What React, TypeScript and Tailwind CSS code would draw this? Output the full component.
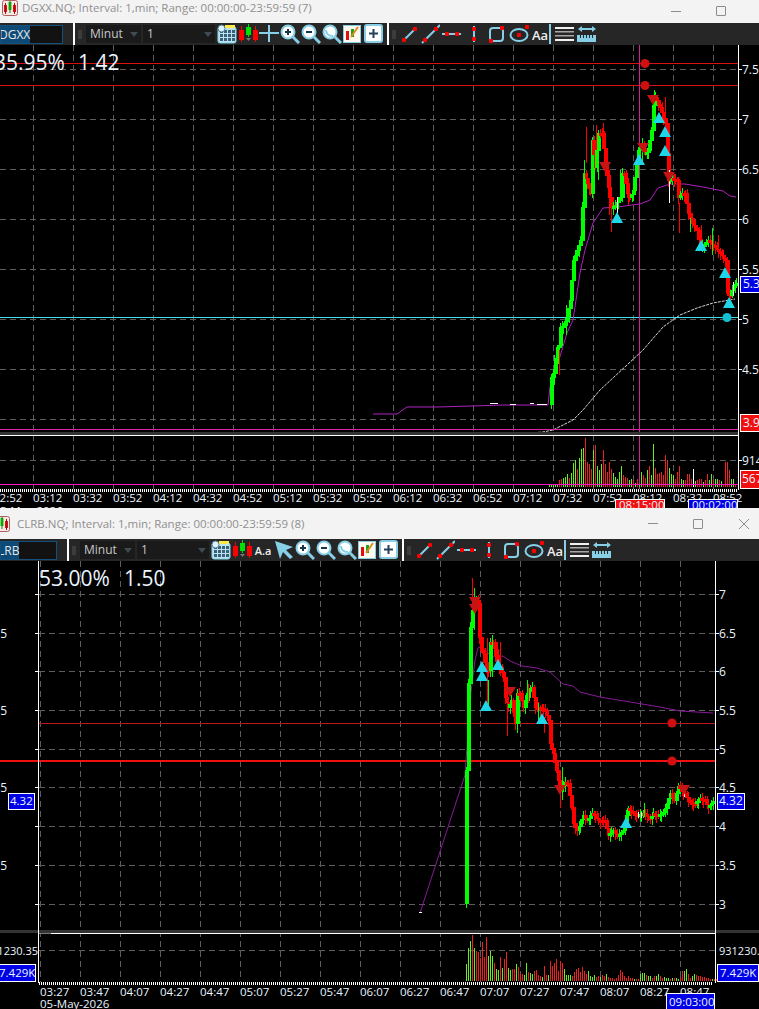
import React from "react";

const GREEN = "#00ff00";
const RED = "#ff0000";
const FONT = "'Open Sans', 'Noto Sans', sans-serif";

type Pt = [number, number];
type Wick = [number, number, number, string];

const line1: Pt[] = [[549,404],[551,377],[553,373],[555,363],[557,347],[559,345],[560,327],[563,325],[567,316],[570,300],[573,260],[577,250],[580,240],[582,207],[584,173],[587,183],[590,193],[592,140],[595,167],[598,133],[602,133],[605,162],[608,187],[611,207],[615,205],[620,197],[622,173],[624,173],[627,193],[630,197],[633,190],[638,150],[642,143],[645,153],[648,150],[651,130],[653,105],[655,97],[660,107],[665,123],[667,153],[668,180],[672,178],[677,180],[678,197],[682,193],[685,193],[688,213],[692,223],[697,230],[700,247],[708,240],[715,247],[720,253],[725,260],[727,293],[730,295],[733,285],[736,283]];
const wicks1: Wick[] = [[586,127,163,RED],[596,125,150,RED],[603,123,133,RED],[611,193,232,RED],[654,90,105,GREEN],[665,97,127,RED],[669,170,203,"#ffffff"],[679,203,233,RED],[617,197,213,"#ffffff"],[584,160,185,GREEN],[620,170,200,GREEN],[701,225,245,RED],[690,218,232,GREEN],[733,282,296,"#ffffff"],[566,305,335,GREEN],[554,355,385,GREEN],[559,350,375,RED],[598,150,180,GREEN],[609,170,215,RED],[628,178,205,RED],[642,140,165,GREEN],[712,228,255,GREEN],[718,235,258,RED]];
const vwap1: Pt[] = [[373,414],[397,414],[407,407],[437,407],[505,405],[548,405],[550,387],[558,363],[567,333],[573,320],[580,273],[585,250],[593,223],[603,208],[617,207],[640,204],[650,200],[658,188],[670,184],[685,184],[703,187],[723,191],[730,196],[736,197]];
const ma1: Pt[] = [[530,433],[543,432],[553,430],[573,420],[583,410],[600,390],[627,365],[643,350],[663,327],[680,315],[697,308],[713,303],[735,299]];
const vol1 = "g3 g3 g3 g3 g3 r7 r8 g9 g10 g13 r9 g14 g24 g27 r18 g29 g38 g39 r49 r25 r23 r18 g37 r42 g21 g17 g23 r37 r23 r15 r25 r18 g14 g10 g8 g15 g21 r12 r10 r9 g7 g8 r7 g4 r8 g2 g15 r12 r9 g17 r21 g12 g43 r19 r13 r14 r15 r12 r32 r27 g19 g13 g12 r8 r15 r21 g8 g7 r7 r13 r13 r8 w18 g6 r7 r8 r8 g5 r7 r13 g7 g13 r7 g8 g8 r7 g6 r3 r25 r25 r17 g8 g8 r3";

const line2: Pt[] = [[466,903],[466,770],[468,683],[470,627],[472,610],[474,603],[476,600],[478,603],[479,637],[481,650],[483,653],[486,670],[488,670],[490,642],[493,642],[497,667],[500,667],[503,677],[505,697],[508,707],[511,700],[515,723],[517,693],[520,693],[523,707],[527,693],[532,687],[535,707],[540,707],[545,710],[548,720],[550,743],[553,753],[556,770],[560,790],[565,782],[568,783],[571,807],[573,823],[577,830],[580,822],[583,815],[587,820],[592,813],[595,815],[598,820],[605,820],[608,835],[613,830],[617,836],[623,830],[628,808],[633,813],[638,814],[643,813],[650,818],[653,813],[658,815],[663,812],[667,803],[670,793],[674,800],[678,786],[685,795],[690,802],[695,803],[700,798],[705,800],[708,807],[713,801]];
const wicks2: Wick[] = [[472,578,610,RED],[474,588,630,GREEN],[487,638,710,RED],[488,680,707,GREEN],[492,635,677,GREEN],[498,649,670,RED],[500,642,667,RED],[507,703,736,RED],[517,717,733,GREEN],[527,680,697,GREEN],[528,684,703,RED],[544,717,733,RED],[538,703,720,GREEN],[562,767,800,GREEN],[560,790,808,RED],[577,823,836,RED],[644,803,817,GREEN],[641,812,818,"#ffffff"],[638,812,818,"#ffffff"],[684,790,797,"#ffffff"]];
const vwap2: Pt[] = [[420,913],[465,775],[471,692],[475,660],[478,648],[482,646],[487,652],[492,657],[503,656],[510,661],[522,666],[537,668],[550,672],[563,684],[573,686],[580,692],[600,697],[630,702],[660,707],[680,711],[713,713]];
const vol2 = "g17 g33 g40 r46 g33 r30 r29 r23 r39 r24 r44 g25 g30 g25 r18 g12 g11 r24 g13 r22 r29 g13 g11 r12 r12 g17 r14 r7 r7 g6 g18 r9 g8 g7 r10 r11 r6 r5 g4 r15 r6 g6 r20 r15 r18 r22 r10 r20 r18 g12 g6 g6 g6 r5 r9 r12 r13 r9 r14 r10 r7 g10 g5 g4 g6 r4 r5 g4 r6 r5 g7 r4 r3 r3 r2 r3 r6 r11 r9 r5 r3 r5 r3 r3 g2 r2 r2 g7 g8 g8 r6 g5 g5 r3 r5 g5 g7 r5 r3 g4 g3 g3 r2 g3 r3 g3 g2 r4 r10 g10 g12 r7 r3 g5 g7 r6 r5 r5 r4 r4 r3 r3 r2 g2 r2 r2 g3 r3 g3 g3";

function pts(p: Pt[]) {
  return p.map((a) => a.join(",")).join(" ");
}

// one candle every 2px, closes read off the anchor list
function Candles({ anchors, wicks }: { anchors: Pt[]; wicks: Wick[] }) {
  const out: React.ReactNode[] = [];
  let prev = anchors[0][1];
  let n = 0;
  for (let i = 1; i < anchors.length; i++) {
    const [x0, y0] = anchors[i - 1];
    const [x1, y1] = anchors[i];
    const steps = Math.max(1, Math.round((x1 - x0) / 2));
    for (let s = 1; s <= steps; s++) {
      const x = x0 + ((x1 - x0) * s) / steps;
      const y = y0 + ((y1 - y0) * s) / steps;
      const c = y < prev ? GREEN : RED;
      const top = Math.min(y, prev);
      const h = Math.max(3, Math.abs(y - prev) + 1);
      n++;
      out.push(
        <g key={n} fill={c}>
          <rect x={x} y={top - 2 - (n % 4)} width={1} height={h + 4 + (n % 4) + (n % 3) * 2} />
          <rect x={x - 1.5} y={top} width={4} height={h} />
        </g>
      );
      prev = y;
    }
  }
  return (
    <g shapeRendering="crispEdges">
      {out}
      {wicks.map((w, i) => (
        <rect key={i} x={w[0]} y={w[1]} width={1} height={w[2] - w[1]} fill={w[3]} />
      ))}
    </g>
  );
}

function Bars({ data, x0, base }: { data: string; x0: number; base: number }) {
  const colors: Record<string, string> = { g: "#66ee22", r: "#f02020", w: "#ffffff" };
  return (
    <g shapeRendering="crispEdges">
      {data.split(" ").map((d, i) => {
        const h = Number(d.slice(1));
        return <rect key={i} x={x0 + i * 2} y={base - h} width={1} height={h} fill={colors[d[0]]} />;
      })}
    </g>
  );
}

function Up({ x, y }: { x: number; y: number }) {
  return <polygon points={`${x},${y - 1} ${x + 6},${y + 10} ${x - 6},${y + 10}`} fill="#1fd6e8" />;
}
function Down({ x, y }: { x: number; y: number }) {
  return <polygon points={`${x - 6},${y} ${x + 6},${y} ${x},${y + 10}`} fill="#c41414" />;
}

function Label({ x, y, children, size = 12, anchor = "start", fill = "#eaf4ff" }: { x: number; y: number; children: React.ReactNode; size?: number; anchor?: "start" | "end" | "middle"; fill?: string }) {
  return (
    <text x={x} y={y} fontSize={size} textAnchor={anchor} fill={fill} fontFamily={FONT}>
      {children}
    </text>
  );
}

function Flag({ x, y, w, h, bg, children, tx, size = 12 }: { x: number; y: number; w: number; h: number; bg: string; children: React.ReactNode; tx: number; size?: number }) {
  return (
    <g>
      <rect x={x + 0.5} y={y + 0.5} width={w} height={h} fill={bg} stroke="#ffffff" />
      <Label x={tx} y={y + h / 2 + size * 0.37} size={size}>{children}</Label>
    </g>
  );
}

function Chart1() {
  const vs = Array.from({ length: 18 }, (_, i) => 33 + i * 40);
  const hs = [69, 119, 169, 219, 269, 319, 369, 419];
  const times = ["02:52","03:12","03:32","03:52","04:12","04:32","04:52","05:12","05:32","05:52","06:12","06:32","06:52","07:12","07:32","07:52","08:12","08:32","08:52"];
  const prices: [string, number][] = [["7.5",69],["7",119],["6.5",169],["6",219],["5.5",269],["5",319],["4.5",369]];
  return (
    <svg viewBox="0 45 759 463" className="block w-full h-[463px] bg-black">
      <g shapeRendering="crispEdges">
        {vs.map((x) => <line key={x} x1={x + 0.5} x2={x + 0.5} y1={45} y2={489} stroke="#5c5c5c" strokeDasharray="6 4" />)}
        {hs.map((y) => <line key={y} x1={0} x2={738} y1={y + 0.5} y2={y + 0.5} stroke="#5c5c5c" strokeDasharray="6 4" />)}
        <line x1={0} x2={738} y1={460.5} y2={460.5} stroke="#5c5c5c" strokeDasharray="6 4" />
        <line x1={0} x2={738} y1={63.5} y2={63.5} stroke="#d81010" />
        <line x1={0} x2={738} y1={85.5} y2={85.5} stroke="#d81010" />
        <line x1={0} x2={738} y1={317.5} y2={317.5} stroke="#3fe0ee" />
        <line x1={639.5} x2={639.5} y1={45} y2={489} stroke="#d81ca0" />
      </g>
      <polyline points={pts(vwap1)} fill="none" stroke="#b020c0" strokeWidth={1} />
      <polyline points={pts(ma1)} fill="none" stroke="#d8d8d8" strokeWidth={1} strokeDasharray="3 1" />
      <g shapeRendering="crispEdges" fill="#ffffff">
        <rect x={490} y={403} width={8} height={1} />
        <rect x={510} y={404} width={6} height={1} />
        <rect x={530} y={403} width={4} height={1} />
        <rect x={537} y={404} width={10} height={1} />
      </g>
      <Candles anchors={line1} wicks={wicks1} />
      <circle cx={645} cy={63.5} r={4.5} fill="#d01010" />
      <circle cx={645} cy={85.5} r={4.5} fill="#d01010" />
      <circle cx={727} cy={317.5} r={4.5} fill="#12bfd0" />
      {[[605,162],[643,143],[653,95],[669,172]].map(([x, y]) => <Down key={x} x={x} y={y} />)}
      {[[617,213],[639,155],[659,113],[665,127],[665,146],[701,241],[725,268],[729,298]].map(([x, y], i) => <Up key={i} x={x} y={y} />)}
      <g shapeRendering="crispEdges">
        <rect x={0} y={429} width={738} height={1} fill="#e020a0" />
        <rect x={0} y={432} width={738} height={3} fill="#333333" />
        <rect x={0} y={435} width={738} height={1} fill="#ffffff" />
      </g>
      <Bars data={vol1} x0={549} base={487} />
      <g shapeRendering="crispEdges">
        <rect x={0} y={484} width={738} height={1} fill="#ff10c0" />
        <line x1={0} x2={738} y1={490.5} y2={490.5} stroke="#ffffff" strokeWidth={3} strokeDasharray="1 1" />
        <rect x={738} y={45} width={1} height={445} fill="#ffffff" />
        {prices.map(([, y]) => <rect key={y} x={738} y={y} width={4} height={1} fill="#ffffff" />)}
        <rect x={738} y={460} width={4} height={1} fill="#ffffff" />
      </g>
      {prices.map(([t, y]) => <Label key={t} x={742} y={y + 5}>{t}</Label>)}
      <Label x={742} y={465}>914</Label>
      <Flag x={740} y={276} w={22} h={16} bg="#0000e6" tx={743}>5.3</Flag>
      <Flag x={740} y={414} w={22} h={17} bg="#f01010" tx={743}>3.9</Flag>
      <Flag x={740} y={470} w={22} h={18} bg="#f01010" tx={742}>567</Flag>
      <Label x={0} y={515} size={11.5}>5-May-2026</Label>
      {times.map((t, i) => <Label key={t} x={-7 + i * 40} y={502} size={11.5}>{t}</Label>)}
      <Flag x={615} y={499} w={49} h={12} bg="#f01010" tx={619} size={11.5}>08:15:00</Flag>
      <Flag x={688} y={499} w={49} h={12} bg="#0000e6" tx={692} size={11.5}>00:02:00</Flag>
      <Label x={-6} y={70} size={21}>35.95%</Label>
      <Label x={78} y={70} size={21}>1.42</Label>
    </svg>
  );
}

function Chart2() {
  const vs = Array.from({ length: 17 }, (_, i) => 40 + i * 40);
  const hs = [594, 633, 671, 710, 749, 787, 826, 865, 904];
  const times = ["03:27","03:47","04:07","04:27","04:47","05:07","05:27","05:47","06:07","06:27","06:47","07:07","07:27","07:47","08:07","08:27","08:47"];
  const prices: [string, number][] = [["7",594],["6.5",633],["6",671],["5.5",710],["5",749],["4.5",787],["4",826],["3.5",865],["3",904]];
  return (
    <svg viewBox="0 561 759 448" className="block w-full h-[448px] bg-black">
      <g shapeRendering="crispEdges">
        {vs.map((x) => <line key={x} x1={x + 0.5} x2={x + 0.5} y1={561} y2={982} stroke="#5c5c5c" strokeDasharray="6 4" />)}
        {hs.map((y) => <line key={y} x1={39} x2={715} y1={y + 0.5} y2={y + 0.5} stroke="#5c5c5c" strokeDasharray="6 4" />)}
        <line x1={39} x2={715} y1={950.5} y2={950.5} stroke="#5c5c5c" strokeDasharray="6 4" />
        <line x1={39} x2={715} y1={723.5} y2={723.5} stroke="#b81818" />
        <rect x={0} y={760} width={715} height={2} fill="#f01010" />
      </g>
      <polyline points={pts(vwap2)} fill="none" stroke="#8a1a9a" strokeWidth={1} />
      <rect x={419} y={912} width={3} height={1} fill="#ffffff" />
      <Candles anchors={line2} wicks={wicks2} />
      <circle cx={672} cy={723} r={4.5} fill="#d01010" />
      <circle cx={672} cy={761} r={4.5} fill="#d01010" />
      {[[475,597],[475,604],[510,687],[560,785],[684,785]].map(([x, y], i) => <Down key={i} x={x} y={y} />)}
      {[[482,662],[482,671],[498,660],[486,701],[542,714],[626,818]].map(([x, y], i) => <Up key={i} x={x} y={y} />)}
      <g shapeRendering="crispEdges">
        <rect x={0} y={930} width={759} height={3} fill="#333333" />
        <rect x={38} y={933} width={678} height={1} fill="#ffffff" />
        <rect x={39} y={933} width={12} height={1} fill="#777777" />
      </g>
      <Bars data={vol2} x0={466} base={981} />
      <g shapeRendering="crispEdges">
        <line x1={39} x2={713} y1={983} y2={983} stroke="#ffffff" strokeWidth={3} strokeDasharray="1 1" />
        <rect x={38} y={561} width={1} height={422} fill="#ffffff" />
        <rect x={715} y={561} width={1} height={373} fill="#ffffff" />
        <rect x={715} y={933} width={1} height={50} fill="#ffffff" />
        {prices.map(([, y]) => <rect key={y} x={715} y={y} width={4} height={1} fill="#ffffff" />)}
        {prices.map(([, y]) => <rect key={y} x={35} y={y} width={3} height={1} fill="#ffffff" />)}
      </g>
      {prices.map(([t, y]) => <Label key={t} x={719} y={y + 5}>{t}</Label>)}
      {prices.filter(([t]) => t.includes(".")).map(([t, y]) => <Label key={t} x={7} y={y + 5} anchor="end">{t}</Label>)}
      <Label x={719} y={955} size={11}>931230.</Label>
      <Label x={38} y={955} size={11} anchor="end">1230.35</Label>
      <Flag x={8} y={793} w={26} h={16} bg="#0000e6" tx={10} size={11.5}>4.32</Flag>
      <Flag x={717} y={793} w={27} h={16} bg="#0000e6" tx={719} size={12}>4.32</Flag>
      <Flag x={-3} y={964} w={38} h={17} bg="#0000e6" tx={-1} size={11.5}>7.429K</Flag>
      <Flag x={717} y={964} w={41} h={17} bg="#0000e6" tx={720} size={11.5}>7.429K</Flag>
      {times.map((t, i) => <Label key={t} x={40 + i * 40} y={996} size={11.5}>{t}</Label>)}
      <Label x={40} y={1008} size={11.5}>05-May-2026</Label>
      <Flag x={666} y={993} w={48} h={17} bg="#0000e6" tx={669} size={11.5}>09:03:00</Flag>
      <Label x={39} y={586} size={21}>53.00%</Label>
      <Label x={124} y={586} size={21}>1.50</Label>
    </svg>
  );
}

const BLUE = "#86cfe6";

function Ico({ w = 20, children }: { w?: number; children: React.ReactNode }) {
  return (
    <svg width={w} height={20} viewBox={`0 0 ${w} 20`} className="shrink-0">
      {children}
    </svg>
  );
}

function CalendarIcon() {
  return (
    <Ico>
      <rect x={1} y={3} width={18} height={16} rx={2} fill="#b8e4f2" stroke={BLUE} />
      <rect x={8} y={1} width={10} height={3} fill="#ffe84a" />
      {[5, 9, 13].map((y) => [4, 8, 12, 16].map((x) => <rect key={`${x}${y}`} x={x - 1} y={y + 1} width={3} height={3} fill="#3d5f78" />))}
      <circle cx={4.5} cy={4.5} r={3.5} fill="#ddf2fa" stroke="#4b7d96" />
    </Ico>
  );
}
function CandlesIcon() {
  return (
    <Ico>
      <rect x={3} y={2} width={1} height={16} fill="#ff0000" />
      <rect x={1} y={6} width={5} height={10} fill="#ff0000" />
      <rect x={10} y={0} width={1} height={13} fill="#00e000" />
      <rect x={8} y={3} width={5} height={8} fill="#00e000" />
      <polygon points="8,14 13,14 10.5,17" fill="#777" />
      <rect x={17} y={2} width={1} height={16} fill="#ff0000" />
      <rect x={15} y={6} width={5} height={10} fill="#ff0000" />
    </Ico>
  );
}
function CrossIcon() {
  return (
    <Ico>
      <rect x={0} y={8} width={20} height={2} fill={BLUE} />
      <rect x={9} y={1} width={2} height={17} fill={BLUE} />
    </Ico>
  );
}
function ZoomIcon({ mode }: { mode: "in" | "out" | "reset" }) {
  return (
    <Ico>
      <line x1={12} y1={12} x2={19} y2={19} stroke={BLUE} strokeWidth={3} />
      <circle cx={8} cy={8} r={6.5} fill="#ffffff" stroke={BLUE} strokeWidth={2} />
      {mode !== "reset" && <rect x={5} y={7} width={6} height={2} fill="#16364a" />}
      {mode === "in" && <rect x={7} y={5} width={2} height={6} fill="#16364a" />}
      {mode === "reset" && <path d="M4 6 Q4 12 11 12" fill="none" stroke={BLUE} strokeWidth={2} />}
    </Ico>
  );
}
function EditIcon() {
  return (
    <Ico w={18}>
      <rect x={0.5} y={1.5} width={17} height={17} fill="#fff8ee" stroke={BLUE} />
      <rect x={3} y={7} width={3} height={9} fill="#e01010" />
      <rect x={8} y={5} width={3} height={8} fill="#20a020" />
      <line x1={8} y1={13} x2={15} y2={3} stroke="#d89020" strokeWidth={2} />
    </Ico>
  );
}
function PlusIcon() {
  return (
    <Ico w={19}>
      <rect x={1} y={1} width={17} height={17} rx={2} fill="#ffffff" stroke={BLUE} strokeWidth={2} />
      <rect x={5} y={8.5} width={9} height={2} fill="#24405a" />
      <rect x={8.5} y={5} width={2} height={9} fill="#24405a" />
    </Ico>
  );
}
function Dot({ x, y }: { x: number; y: number }) {
  return <rect x={x - 2} y={y - 2} width={4} height={4} rx={1} fill="#ff0000" />;
}
function LineSeg() {
  return (
    <Ico w={18}>
      <line x1={3} y1={16} x2={14} y2={5} stroke={BLUE} strokeWidth={2} />
      <Dot x={3} y={16} />
      <Dot x={14} y={5} />
    </Ico>
  );
}
function LineExt() {
  return (
    <Ico w={19}>
      <line x1={1} y1={19} x2={19} y2={1} stroke={BLUE} strokeWidth={2} />
      <Dot x={4} y={16} />
      <Dot x={15} y={5} />
    </Ico>
  );
}
function LineH() {
  return (
    <Ico>
      <line x1={0} y1={10} x2={19} y2={10} stroke={BLUE} strokeWidth={2} />
      <Dot x={5} y={10} />
      <Dot x={15} y={10} />
    </Ico>
  );
}
function LineV() {
  return (
    <Ico w={6}>
      <line x1={3} y1={2} x2={3} y2={18} stroke={BLUE} strokeWidth={2} />
      <Dot x={3} y={5} />
      <Dot x={3} y={15} />
    </Ico>
  );
}
function RectTool() {
  return (
    <Ico w={17}>
      <rect x={2} y={4} width={13} height={13} rx={3} fill="none" stroke={BLUE} strokeWidth={2} />
      <Dot x={14} y={4} />
      <Dot x={3} y={17} />
    </Ico>
  );
}
function EllipseTool() {
  return (
    <Ico>
      <ellipse cx={10} cy={11} rx={8.5} ry={6} fill="none" stroke={BLUE} strokeWidth={2} />
      <Dot x={10} y={11} />
      <Dot x={18} y={3} />
    </Ico>
  );
}
function LinesTool() {
  return (
    <Ico>
      {[3, 7, 11, 15].map((y, i) => <rect key={y} x={0} y={y} width={19} height={i === 0 || i === 3 ? 2 : 1.5} fill={i === 0 || i === 3 ? "#f0f0f0" : "#a8a8a8"} />)}
    </Ico>
  );
}
function RulerTool() {
  return (
    <Ico>
      <path d="M1 5 L5 2 V4 H15 V2 L19 5 L15 8 V6 H5 V8 Z" fill={BLUE} />
      <rect x={0} y={11} width={19} height={7} fill={BLUE} />
      {[3, 6, 9, 12, 15].map((x) => <rect key={x} x={x} y={11} width={1} height={3} fill="#262626" />)}
    </Ico>
  );
}
function ArrowIcon() {
  return (
    <Ico>
      <path d="M1 1 L19 7 L12 10 L19 17 L16 19 L9 12 L6 19 Z" fill={BLUE} />
    </Ico>
  );
}
function AaText({ children, cls }: { children: string; cls: string }) {
  return <span className={`text-[#eeeeee] font-semibold leading-none ${cls}`}>{children}</span>;
}

function Select({ label, w }: { label: string; w: string }) {
  return (
    <div className={`flex items-center justify-between h-[18px] bg-[#1a1a1a] pl-[4px] pr-[3px] shrink-0 ${w}`}>
      <span className="text-[12px] text-[#c8c8c8] leading-none">{label}</span>
      <span className="w-0 h-0 border-x-[4px] border-x-transparent border-t-[5px] border-t-[#3f4a52]" />
    </div>
  );
}

function Sep() {
  return <div className="w-[2px] h-[22px] bg-white shrink-0" />;
}
function Grip() {
  return <div className="w-[4px] h-[9px] bg-[#3c3c3c] shrink-0" />;
}

function Toolbar({ symbol, second }: { symbol: string; second?: boolean }) {
  return (
    <div className="flex items-center h-[22px] bg-[#262626] shrink-0 overflow-hidden">
      <div className={`flex items-center h-[19px] border border-[#14507c] bg-[#121212] overflow-hidden shrink-0 ${second ? "w-[57px]" : "w-[63px]"}`}>
        <span className={`text-[12px] text-[#e6e6e6] leading-[17px] bg-[#0d4a78] ${second ? "-ml-[3px]" : "-ml-[2px]"}`}>{symbol}</span>
      </div>
      <div className="ml-[10px]"><Sep /></div>
      <div className="ml-[3px] mr-[4px]"><Grip /></div>
      <Select label="Minut" w="w-[55px]" />
      <div className="ml-[2px]"><Select label="1" w="w-[72px]" /></div>
      <div className="ml-[2px] flex items-center gap-[1px]">
        <CalendarIcon />
        <CandlesIcon />
        {second ? (
          <>
            <div className="w-[20px] flex justify-center"><AaText cls="text-[11px]">A.a</AaText></div>
            <ArrowIcon />
          </>
        ) : (
          <CrossIcon />
        )}
        <ZoomIcon mode="in" />
        <ZoomIcon mode="out" />
        <ZoomIcon mode="reset" />
        <EditIcon />
        <div className="ml-[2px]"><PlusIcon /></div>
      </div>
      <div className="ml-[4px]"><Sep /></div>
      <div className="ml-[3px]"><Grip /></div>
      <div className="ml-[5px] flex items-center gap-[2px]">
        <LineSeg />
        <LineExt />
        <LineH />
        <div className="ml-[7px]"><LineV /></div>
        <div className="ml-[9px]"><RectTool /></div>
        <div className="ml-[2px]"><EllipseTool /></div>
        <div className="ml-[1px] w-[15px]"><AaText cls="text-[13px]">Aa</AaText></div>
        <div className="w-[2px] h-[20px] bg-[#86cfe6]" />
        <div className="ml-[2px]"><LinesTool /></div>
        <RulerTool />
      </div>
    </div>
  );
}

function CandleLogo() {
  return (
    <svg width={16} height={16} viewBox="0 0 16 16" className="shrink-0">
      <rect x={0.5} y={0.5} width={15} height={15} rx={2} fill="#f8e8e8" stroke="#b06060" />
      <rect x={2} y={5} width={3} height={7} fill="#e01010" />
      <rect x={6.5} y={2} width={3} height={8} fill="#10c010" />
      <rect x={11} y={5} width={3} height={7} fill="#e01010" />
      <rect x={3} y={3} width={1} height={11} fill="#a01010" />
      <rect x={7.5} y={1} width={1} height={12} fill="#108010" />
      <rect x={12} y={3} width={1} height={11} fill="#a01010" />
    </svg>
  );
}

function TitleBar({ title, second }: { title: string; second?: boolean }) {
  return (
    <div className={`flex items-center bg-[#f3f3f3] shrink-0 ${second ? "h-[31px]" : "h-[23px] pb-[7px]"}`}>
      <div className={second ? "-ml-[6px]" : "ml-[2px]"}><CandleLogo /></div>
      <span className={`text-[11.5px] text-[#8f8f8f] leading-none whitespace-nowrap ${second ? "ml-[7px]" : "ml-[4px]"}`}>{title}</span>
      <div className={`ml-auto flex items-center ${second ? "pr-[10px]" : "pr-[33px] pt-[6px]"}`}>
        <div className="w-[10px] h-[1px] bg-[#8c8c8c]" />
        <div className="ml-[35px] w-[10px] h-[10px] border border-[#8c8c8c] rounded-[1px]" />
        {second && (
          <svg width={10} height={10} viewBox="0 0 10 10" className="ml-[36px]">
            <path d="M0 0 L10 10 M10 0 L0 10" stroke="#8c8c8c" strokeWidth={1} />
          </svg>
        )}
      </div>
    </div>
  );
}

export default function App() {
  return (
    <div className="flex flex-col w-[759px] h-[1009px] overflow-hidden bg-black" style={{ fontFamily: FONT }}>
      <div className="flex flex-col shrink-0">
        <TitleBar title="DGXX.NQ; Interval: 1,min; Range: 00:00:00-23:59:59 (7)" />
        <Toolbar symbol="DGXX" />
        <Chart1 />
      </div>
      <div className="flex flex-col shrink-0">
        <TitleBar second title="CLRB.NQ; Interval: 1,min; Range: 00:00:00-23:59:59 (8)" />
        <Toolbar second symbol="LRB" />
        <Chart2 />
      </div>
    </div>
  );
}
